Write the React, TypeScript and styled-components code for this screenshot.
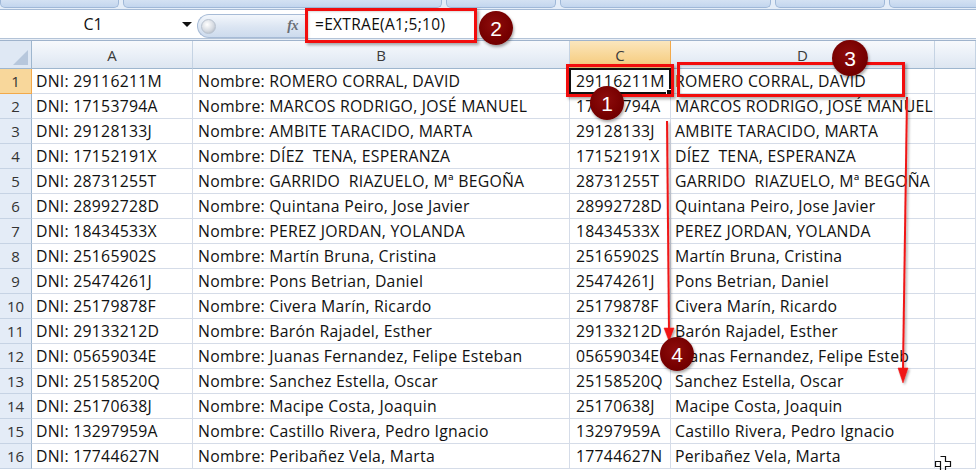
import React from 'react';
import styled, { createGlobalStyle } from 'styled-components';

const GlobalStyle = createGlobalStyle`
  html, body { margin: 0; padding: 0; background: #fff; overflow: hidden; }
  body { font-family: "Open Sans", "Liberation Sans", sans-serif; }
  #root { width: 976px; height: 470px; }
`;

const Page = styled.div`
  position: relative;
  width: 976px;
  height: 470px;
  overflow: hidden;
  background: #fff;
`;

const Ribbon = styled.div`
  display: flex;
  gap: 4px;
  height: 9px;
  background: #e4edf8;
  border-bottom: 1px solid #a4bad6;
`;

const RibbonGroup = styled.div<{ $w: number }>`
  flex: 0 0 ${p => p.$w}px;
  height: 7px;
  background: linear-gradient(#d3e1f3, #c3d6ee);
  border: 1px solid #9fb8d8;
  border-top: none;
  border-radius: 0 0 5px 5px;
`;

const FormulaBar = styled.div`
  display: flex;
  align-items: center;
  height: 28px;
  background: #fff;
`;

const NameBox = styled.div`
  display: flex;
  align-items: center;
  width: 196px;
  height: 100%;
`;

const NameText = styled.div`
  flex: 1;
  text-align: center;
  font-size: 16px;
  color: #111;
  padding-left: 4px;
`;

const DropArrow = styled.div`
  width: 0;
  height: 0;
  border-left: 5px solid transparent;
  border-right: 5px solid transparent;
  border-top: 5px solid #111;
  margin-right: 4px;
`;

const FxPill = styled.div`
  display: flex;
  align-items: center;
  justify-content: space-between;
  box-sizing: border-box;
  width: 108px;
  height: 24px;
  margin-left: 1px;
  margin-top: 4px;
  padding: 0 7px 0 3px;
  border: 1px solid #a7bbd6;
  border-right: none;
  border-radius: 12px 0 0 12px;
  background: linear-gradient(#f3f7fc, #dbe5f2 55%, #cddbed);
`;

const Knob = styled.div`
  width: 13px;
  height: 13px;
  border-radius: 50%;
  background: radial-gradient(circle at 40% 35%, #ffffff, #d6dbe2 55%, #a4acb8);
  border: 1px solid #b8c2cf;
`;

const Fx = styled.span`
  font-family: "Liberation Serif", serif;
  font-style: italic;
  font-weight: bold;
  font-size: 14px;
  color: #6a6f76;
  letter-spacing: -0.5px;
`;

const FormulaInput = styled.div`
  flex: 1;
  display: flex;
  align-items: center;
  height: 100%;
  padding-left: 10px;
  font-size: 15.5px;
  letter-spacing: 0.3px;
  color: #0d0d0d;
`;

const Divider = styled.div`
  height: 1px;
  background: #e9eff7;
  border-top: 1px solid #b3c3d7;
  border-bottom: 1px solid #9fb3cc;
`;

const Sheet = styled.div`
  display: grid;
  grid-template-columns: 32px 161px 377px 101px 264px 1fr;
  grid-template-rows: 28px;
  grid-auto-rows: 25px;
`;

const Corner = styled.div`
  position: relative;
  box-sizing: border-box;
  background: #dfe8f4;
  border-right: 1px solid #9eb6ce;
  border-bottom: 1px solid #9eb6ce;
  &::after {
    content: "";
    position: absolute;
    right: 3px;
    bottom: 3px;
    width: 0;
    height: 0;
    border-left: 15px solid transparent;
    border-bottom: 15px solid #b7c7dc;
  }
`;

const ColHeader = styled.div<{ $active?: boolean }>`
  box-sizing: border-box;
  display: flex;
  align-items: center;
  justify-content: center;
  padding-top: 1px;
  font-size: 15px;
  color: #3a3a3a;
  background: ${p => (p.$active
    ? 'linear-gradient(#fbe6bd, #f8d696 55%, #f5c97a)'
    : 'linear-gradient(#f7f9fc, #e9eff7 55%, #dde6f1)')};
  border-right: 1px solid ${p => (p.$active ? '#f2a94a' : '#c5d3e3')};
  border-bottom: 1px solid ${p => (p.$active ? '#f2a94a' : '#9eb6ce')};
`;

const RowHeader = styled.div<{ $active?: boolean }>`
  box-sizing: border-box;
  display: flex;
  align-items: center;
  justify-content: center;
  font-size: 15px;
  color: #333;
  background: ${p => (p.$active ? '#f8d79b' : '#e4ecf7')};
  border-right: 1px solid ${p => (p.$active ? '#f2a94a' : '#9eb6ce')};
  border-bottom: 1px solid ${p => (p.$active ? '#f2a94a' : '#c6d3e4')};
`;

const Cell = styled.div<{ $pad?: number; $selected?: boolean }>`
  position: relative;
  box-sizing: border-box;
  display: flex;
  align-items: center;
  padding-left: ${p => p.$pad ?? 4}px;
  white-space: pre;
  font-size: 15.8px;
  letter-spacing: 0.25px;
  color: #111;
  border-right: 1px solid #d5dce8;
  border-bottom: 1px solid #d5dce8;
  ${p => p.$selected && `
    &::before {
      content: "";
      position: absolute;
      left: -1px;
      top: -1px;
      right: -1px;
      bottom: -1px;
      border: 2px solid #111;
    }
    &::after {
      content: "";
      position: absolute;
      right: -3px;
      bottom: -3px;
      width: 5px;
      height: 5px;
      background: #111;
      border: 1px solid #fff;
    }
  `}
`;

const Callout = styled.div<{ $x: number; $y: number; $w: number; $h: number }>`
  position: absolute;
  left: ${p => p.$x}px;
  top: ${p => p.$y}px;
  width: ${p => p.$w}px;
  height: ${p => p.$h}px;
  box-sizing: border-box;
  border: 3px solid #f20d0d;
  box-shadow: 2px 2px 3px rgba(0, 0, 0, 0.35), inset 1px 1px 2px rgba(0, 0, 0, 0.15);
`;

const Badge = styled.div<{ $x: number; $y: number; $r: number }>`
  position: absolute;
  left: ${p => p.$x - p.$r}px;
  top: ${p => p.$y - p.$r}px;
  width: ${p => p.$r * 2}px;
  height: ${p => p.$r * 2}px;
  border-radius: 50%;
  display: flex;
  align-items: center;
  justify-content: center;
  background: radial-gradient(circle at 45% 40%, #8e0c0c, #760000 60%, #650000);
  box-shadow: 1px 2px 3px rgba(0, 0, 0, 0.35);
  color: #fff;
  font-family: "Liberation Sans", "Open Sans", sans-serif;
  font-size: 21px;
  line-height: 1;
`;

const Overlay = styled.svg`
  position: absolute;
  left: 0;
  top: 0;
  width: 976px;
  height: 470px;
  pointer-events: none;
`;

const CursorGlyph = styled.svg`
  position: absolute;
  left: 931px;
  top: 455px;
  width: 24px;
  height: 16px;
`;

type Row = [string, string, string, string];

const rows: Row[] = [
  ['DNI: 29116211M', 'Nombre: ROMERO CORRAL, DAVID', '29116211M', 'ROMERO CORRAL, DAVID'],
  ['DNI: 17153794A', 'Nombre: MARCOS RODRIGO, JOSÉ MANUEL', '17153794A', 'MARCOS RODRIGO, JOSÉ MANUEL'],
  ['DNI: 29128133J', 'Nombre: AMBITE TARACIDO, MARTA', '29128133J', 'AMBITE TARACIDO, MARTA'],
  ['DNI: 17152191X', 'Nombre: DÍEZ  TENA, ESPERANZA', '17152191X', 'DÍEZ  TENA, ESPERANZA'],
  ['DNI: 28731255T', 'Nombre: GARRIDO  RIAZUELO, Mª BEGOÑA', '28731255T', 'GARRIDO  RIAZUELO, Mª BEGOÑA'],
  ['DNI: 28992728D', 'Nombre: Quintana Peiro, Jose Javier', '28992728D', 'Quintana Peiro, Jose Javier'],
  ['DNI: 18434533X', 'Nombre: PEREZ JORDAN, YOLANDA', '18434533X', 'PEREZ JORDAN, YOLANDA'],
  ['DNI: 25165902S', 'Nombre: Martín Bruna, Cristina', '25165902S', 'Martín Bruna, Cristina'],
  ['DNI: 25474261J', 'Nombre: Pons Betrian, Daniel', '25474261J', 'Pons Betrian, Daniel'],
  ['DNI: 25179878F', 'Nombre: Civera Marín, Ricardo', '25179878F', 'Civera Marín, Ricardo'],
  ['DNI: 29133212D', 'Nombre: Barón Rajadel, Esther', '29133212D', 'Barón Rajadel, Esther'],
  ['DNI: 05659034E', 'Nombre: Juanas Fernandez, Felipe Esteban', '05659034E', 'Juanas Fernandez, Felipe Esteb'],
  ['DNI: 25158520Q', 'Nombre: Sanchez Estella, Oscar', '25158520Q', 'Sanchez Estella, Oscar'],
  ['DNI: 25170638J', 'Nombre: Macipe Costa, Joaquin', '25170638J', 'Macipe Costa, Joaquin'],
  ['DNI: 13297959A', 'Nombre: Castillo Rivera, Pedro Ignacio', '13297959A', 'Castillo Rivera, Pedro Ignacio'],
  ['DNI: 17744627N', 'Nombre: Peribañez Vela, Marta', '17744627N', 'Peribañez Vela, Marta'],
];

const ribbonGroups = [117, 317, 108, 209, 108, 120];
const columns = ['A', 'B', 'C', 'D', ''];

export default function App() {
  return (
    <Page>
      <GlobalStyle />
      <Ribbon>
        {ribbonGroups.map((w, i) => (
          <RibbonGroup key={i} $w={w} />
        ))}
      </Ribbon>
      <FormulaBar>
        <NameBox>
          <NameText>C1</NameText>
          <DropArrow />
        </NameBox>
        <FxPill>
          <Knob />
          <Fx>fx</Fx>
        </FxPill>
        <FormulaInput>=EXTRAE(A1;5;10)</FormulaInput>
      </FormulaBar>
      <Divider />
      <Sheet>
        <Corner />
        {columns.map((c, i) => (
          <ColHeader key={i} $active={c === 'C'}>{c}</ColHeader>
        ))}
        {rows.map((r, i) => (
          <React.Fragment key={i}>
            <RowHeader $active={i === 0}>{i + 1}</RowHeader>
            <Cell>{r[0]}</Cell>
            <Cell $pad={5}>{r[1]}</Cell>
            <Cell $pad={6} $selected={i === 0}>{r[2]}</Cell>
            <Cell $pad={4}>{r[3]}</Cell>
            <Cell />
          </React.Fragment>
        ))}
      </Sheet>

      <Overlay viewBox="0 0 976 470">
        <defs>
          <filter id="shadow" x="-50%" y="-10%" width="200%" height="120%">
            <feDropShadow dx="1.5" dy="1.5" stdDeviation="1.2" floodColor="#000" floodOpacity="0.35" />
          </filter>
        </defs>
        <g filter="url(#shadow)" fill="#f01515" stroke="#f01515">
          <line x1="667" y1="121" x2="669" y2="330" strokeWidth="2" />
          <polygon points="664,328 674,328 669,341" strokeWidth="0.5" />
          <line x1="907" y1="97" x2="903" y2="370" strokeWidth="2" />
          <polygon points="898,368 908,368 903,383" strokeWidth="0.5" />
        </g>
      </Overlay>

      <Callout $x={566} $y={64} $w={108} $h={33} />
      <Callout $x={305} $y={8} $w={172} $h={35} />
      <Callout $x={677} $y={62} $w={228} $h={35} />

      <Badge $x={607} $y={103} $r={17}>1</Badge>
      <Badge $x={496} $y={28} $r={17}>2</Badge>
      <Badge $x={850} $y={58} $r={18}>3</Badge>
      <Badge $x={677} $y={354} $r={17}>4</Badge>

      <CursorGlyph viewBox="0 0 24 16">
        <path
          d="M9.5 1.5 H14.5 V6.5 H19.5 V11.5 H14.5 V16 M9.5 16 V11.5 H4.5 V6.5 H9.5 Z"
          fill="#fff"
          stroke="#111"
          strokeWidth="1.2"
        />
      </CursorGlyph>
    </Page>
  );
}
